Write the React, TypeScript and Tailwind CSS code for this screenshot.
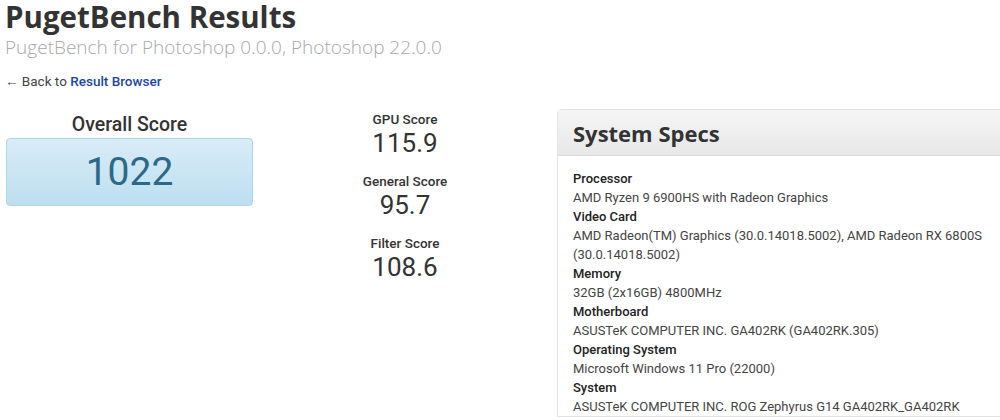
import React from 'react';

const specs: [string, string[]][] = [
  ['Processor', ['AMD Ryzen 9 6900HS with Radeon Graphics']],
  ['Video Card', ['AMD Radeon(TM) Graphics (30.0.14018.5002), AMD Radeon RX 6800S', '(30.0.14018.5002)']],
  ['Memory', ['32GB (2x16GB) 4800MHz']],
  ['Motherboard', ['ASUSTeK COMPUTER INC. GA402RK (GA402RK.305)']],
  ['Operating System', ['Microsoft Windows 11 Pro (22000)']],
  ['System', ['ASUSTeK COMPUTER INC. ROG Zephyrus G14 GA402RK_GA402RK']],
];

const subScores = [
  { label: 'GPU Score', value: '115.9' },
  { label: 'General Score', value: '95.7' },
  { label: 'Filter Score', value: '108.6' },
];

const heading = { fontFamily: '"Open Sans", "DejaVu Sans", sans-serif' };
const body = { fontFamily: 'Roboto, "Liberation Sans", sans-serif' };

export default function App() {
  return (
    <div className="h-[420px] w-[1000px] overflow-hidden bg-white pl-[5px] text-[#333]" style={body}>
      {/* Page header */}
      <h1 className="text-[29.5px] font-bold leading-[34px] text-[#333]" style={heading}>
        PugetBench Results
      </h1>
      <div className="text-[19px] font-light leading-[26px] text-[#a8a8a8]" style={heading}>
        PugetBench for Photoshop 0.0.0, Photoshop 22.0.0
      </div>
      <div className="mt-[12px] text-[13.5px] leading-[18px] text-[#444]">
        ← Back to <a className="font-medium text-[#1b47a3]">Result Browser</a>
      </div>

      <div className="mt-[20px] flex">
        {/* Overall score */}
        <div className="ml-[1px] w-[247px] shrink-0 pt-[3px]">
          <div className="text-center text-[19.5px] font-medium leading-[24px] text-[#333]">Overall Score</div>
          <div className="mt-[1px] flex h-[68px] items-center justify-center rounded-[4px] border border-[#acd6ec] bg-gradient-to-b from-[#d9ecf7] to-[#bcdff0] text-[39px] leading-none text-[#2d6888]">
            1022
          </div>
        </div>

        {/* Sub scores */}
        <div className="flex w-[304px] shrink-0 flex-col items-center">
          {subScores.map((s) => (
            <div key={s.label} className="mb-[14px] flex flex-col items-center">
              <div className="text-[13.5px] font-medium leading-[18px] text-[#333]">{s.label}</div>
              <div className="text-[26px] leading-[30px] text-[#333]">{s.value}</div>
            </div>
          ))}
        </div>

        {/* System specs */}
        <div className="-mt-[1px] w-[470px] shrink-0 rounded-tl-[4px] border border-[#e3e3e3]">
          <div className="flex h-[46px] items-center border-b border-[#dcdcdc] bg-gradient-to-b from-[#f5f5f5] to-[#e8e8e8] px-[15px]">
            <h2 className="text-[22px] font-bold leading-none text-[#333]" style={heading}>
              System Specs
            </h2>
          </div>
          <div className="px-[15px] pt-[13px] text-[13px] leading-[19px]">
            {specs.map(([label, lines]) => (
              <div key={label}>
                <div className="font-medium text-[#222]">{label}</div>
                {lines.map((l) => (
                  <div key={l} className="text-[#444]">{l}</div>
                ))}
              </div>
            ))}
          </div>
        </div>
      </div>
    </div>
  );
}
